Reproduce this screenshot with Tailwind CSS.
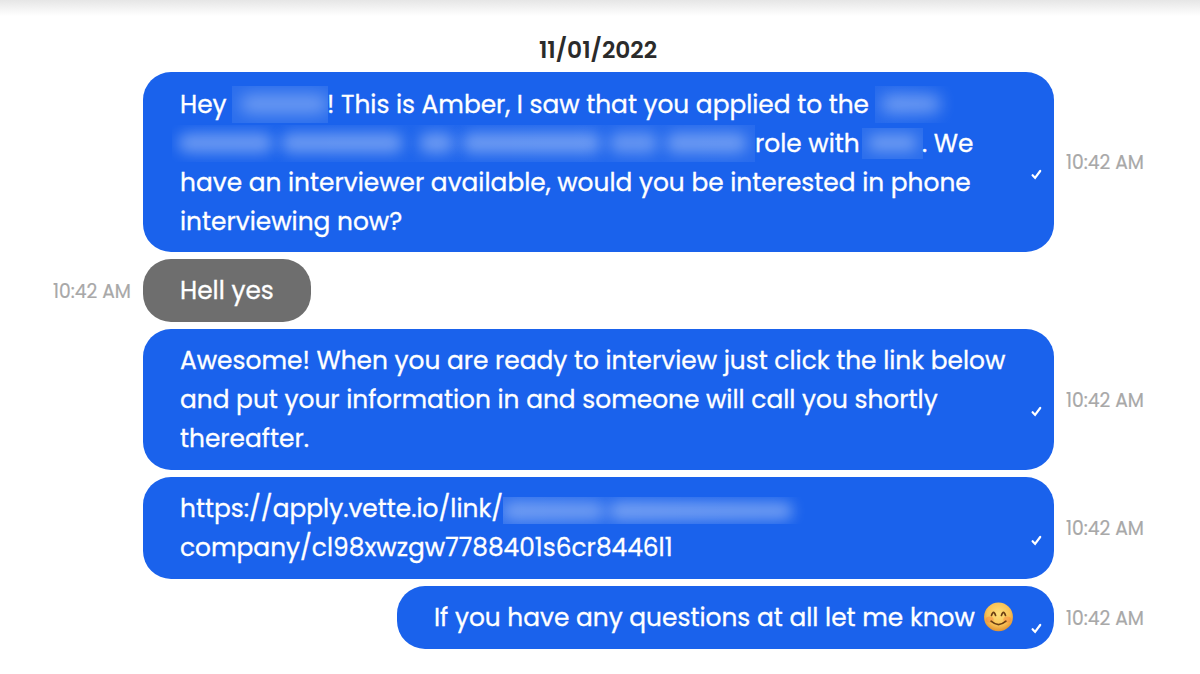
<!DOCTYPE html>
<html lang="en">
<head>
  <meta charset="UTF-8">
  <meta name="viewport" content="width=device-width, initial-scale=1.0">
  <title>Messages</title>
  <script src="https://cdn.jsdelivr.net/npm/@tailwindcss/browser@4"></script>
</head>
<body class="h-[674px] overflow-hidden bg-white font-[Poppins,Inter,sans-serif]">
  <div class="h-4 bg-linear-to-b from-[#e6e6e6] to-white"></div>

  <main class="flex flex-col">
    <h1 class="mt-[19px] h-[30px] w-[1196px] text-center text-[23.3px] leading-[30px] font-semibold text-[#2b2b2b]">11/01/2022</h1>

    <div class="mt-[7.4px] flex flex-col gap-[7px]">
      <!-- outgoing -->
      <div class="flex items-center pl-[143px]">
        <div class="flex h-[180px] w-[911px] items-center justify-between rounded-[28px] bg-[#1a62ec] pr-3 pl-[37px] text-[24.85px] leading-[39px] text-white [-webkit-text-stroke:0.3px_white]">
          <div class="pt-px whitespace-nowrap">
            <div class="flex h-[39px] items-center">
              <span class="w-[52px]">Hey</span>
              <span class="flex h-[37px] w-[96px] items-center overflow-hidden bg-white/8 pl-2"><span class="h-[18px] w-full rounded-full bg-white/32 blur-[8px]"></span></span>
              <span class="-ml-px w-[548px] tracking-[-0.02px]">! This is Amber, I saw that you applied to the</span>
              <span class="flex h-[37px] w-[80px] items-center overflow-hidden bg-linear-to-r from-white/5 to-transparent pr-3.5 pl-1.5"><span class="h-[18px] w-full rounded-full bg-white/36 blur-[8px]"></span></span>
            </div>
            <div class="flex h-[39px] items-center">
              <span class="-ml-2 flex h-[37px] w-[583px] items-center gap-2 overflow-hidden bg-linear-to-r from-transparent to-white/6 pr-2 pl-1.5">
                <span class="h-[20px] w-[98px] rounded-full bg-white/34 blur-[7px]"></span>
                <span class="h-[20px] w-[126px] rounded-full bg-white/34 blur-[7px]"></span>
                <span class="ml-2 h-[20px] w-[36px] rounded-full bg-white/34 blur-[7px]"></span>
                <span class="h-[20px] w-[144px] rounded-full bg-white/34 blur-[7px]"></span>
                <span class="h-[20px] w-[50px] rounded-full bg-white/30 blur-[7px]"></span>
                <span class="h-[20px] w-[84px] rounded-full bg-white/32 blur-[7px]"></span>
              </span>
              <span class="w-[107px]">role with</span>
              <span class="flex h-[31px] w-[61px] items-center overflow-hidden bg-white/8 px-1.5"><span class="h-4 w-full rounded-full bg-white/32 blur-[7px]"></span></span>
              <span class="-ml-px">. We</span>
            </div>
            <div>have an interviewer available, would you be interested in phone</div>
            <div>interviewing now?</div>
          </div>
          <svg class="mt-6 size-[11px] shrink-0" viewBox="0 0 11 11" fill="none" stroke="white" stroke-width="2.2" stroke-linecap="round"><path d="M1.6 6.2l2.5 2.7L9.2 2"/></svg>
        </div>
        <span class="ml-3 pt-0.5 text-[18.7px] text-[#a8a8a8] [-webkit-text-stroke:0.2px_#a8a8a8]">10:42 AM</span>
      </div>

      <!-- incoming -->
      <div class="flex items-center pl-[53px]">
        <span class="w-[90px] pt-0.5 text-[18.7px] text-[#a8a8a8] [-webkit-text-stroke:0.2px_#a8a8a8]">10:42 AM</span>
        <div class="h-[63px] w-[168px] rounded-[28px] bg-[#6e6e6e] pt-3 pl-[37px] text-[24.85px] leading-[39px] text-white [-webkit-text-stroke:0.3px_white]">Hell yes</div>
      </div>

      <div class="flex items-center pl-[143px]">
        <div class="flex h-[141px] w-[911px] items-center justify-between rounded-[28px] bg-[#1a62ec] pr-3 pl-[37px] text-[24.85px] leading-[39px] text-white [-webkit-text-stroke:0.3px_white]">
          <div class="whitespace-nowrap">
            <div>Awesome! When you are ready to interview just click the link below</div>
            <div>and put your information in and someone will call you shortly</div>
            <div>thereafter.</div>
          </div>
          <svg class="mt-6 size-[11px] shrink-0" viewBox="0 0 11 11" fill="none" stroke="white" stroke-width="2.2" stroke-linecap="round"><path d="M1.6 6.2l2.5 2.7L9.2 2"/></svg>
        </div>
        <span class="ml-3 pt-0.5 text-[18.7px] text-[#a8a8a8] [-webkit-text-stroke:0.2px_#a8a8a8]">10:42 AM</span>
      </div>

      <div class="flex items-center pl-[143px]">
        <div class="flex h-[102px] w-[911px] items-center justify-between rounded-[28px] bg-[#1a62ec] pr-3 pl-[37px] text-[24.85px] leading-[39px] text-white [-webkit-text-stroke:0.3px_white]">
          <div class="whitespace-nowrap">
            <div class="flex h-[39px] items-center">
              <span class="w-[323px]">https://apply.vette.io/link/</span>
              <span class="mt-1 flex h-[27px] w-[304px] items-center gap-1 overflow-hidden bg-linear-to-r from-white/10 to-transparent pr-3">
                <span class="h-[18px] w-[102px] rounded-full bg-white/32 blur-[7px]"></span>
                <span class="h-[18px] w-[184px] rounded-full bg-white/36 blur-[7px]"></span>
              </span>
            </div>
            <div>company/cl98xwzgw7788401s6cr8446l1</div>
          </div>
          <svg class="mt-6 size-[11px] shrink-0" viewBox="0 0 11 11" fill="none" stroke="white" stroke-width="2.2" stroke-linecap="round"><path d="M1.6 6.2l2.5 2.7L9.2 2"/></svg>
        </div>
        <span class="ml-3 pt-0.5 text-[18.7px] text-[#a8a8a8] [-webkit-text-stroke:0.2px_#a8a8a8]">10:42 AM</span>
      </div>

      <div class="flex items-center pl-[397px]">
        <div class="flex h-[63px] w-[657px] items-center rounded-[28px] bg-[#1a62ec] pr-3 pl-[37px] text-[24.85px] leading-[39px] whitespace-nowrap text-white [-webkit-text-stroke:0.3px_white]">
          <span class="w-[549px]">If you have any questions at all let me know</span>
          <svg class="size-[31px] shrink-0" viewBox="0 0 30 30" fill="none">
            <defs>
              <radialGradient id="face" cx=".5" cy=".4" r=".6">
                <stop offset="0" stop-color="#ffe07a"/>
                <stop offset=".65" stop-color="#f9c356"/>
                <stop offset="1" stop-color="#e0902f"/>
              </radialGradient>
            </defs>
            <circle cx="15" cy="14.4" r="14" fill="url(#face)"/>
            <ellipse cx="6.5" cy="17" rx="3.8" ry="3" fill="#f5793b" opacity=".4"/>
            <ellipse cx="23.5" cy="17" rx="3.8" ry="3" fill="#f5793b" opacity=".4"/>
            <path d="M8.2 13q2-6 4 0M17.8 13q2-6 4 0M7.8 18.6q7.2 6.4 14.4 0" stroke="#6b3f14" stroke-width="1.6" stroke-linecap="round"/>
          </svg>
          <svg class="mt-[22px] ml-auto size-[11px] shrink-0" viewBox="0 0 11 11" fill="none" stroke="white" stroke-width="2.2" stroke-linecap="round"><path d="M1.6 6.2l2.5 2.7L9.2 2"/></svg>
        </div>
        <span class="ml-3 pt-0.5 text-[18.7px] text-[#a8a8a8] [-webkit-text-stroke:0.2px_#a8a8a8]">10:42 AM</span>
      </div>
    </div>
  </main>
</body>
</html>
